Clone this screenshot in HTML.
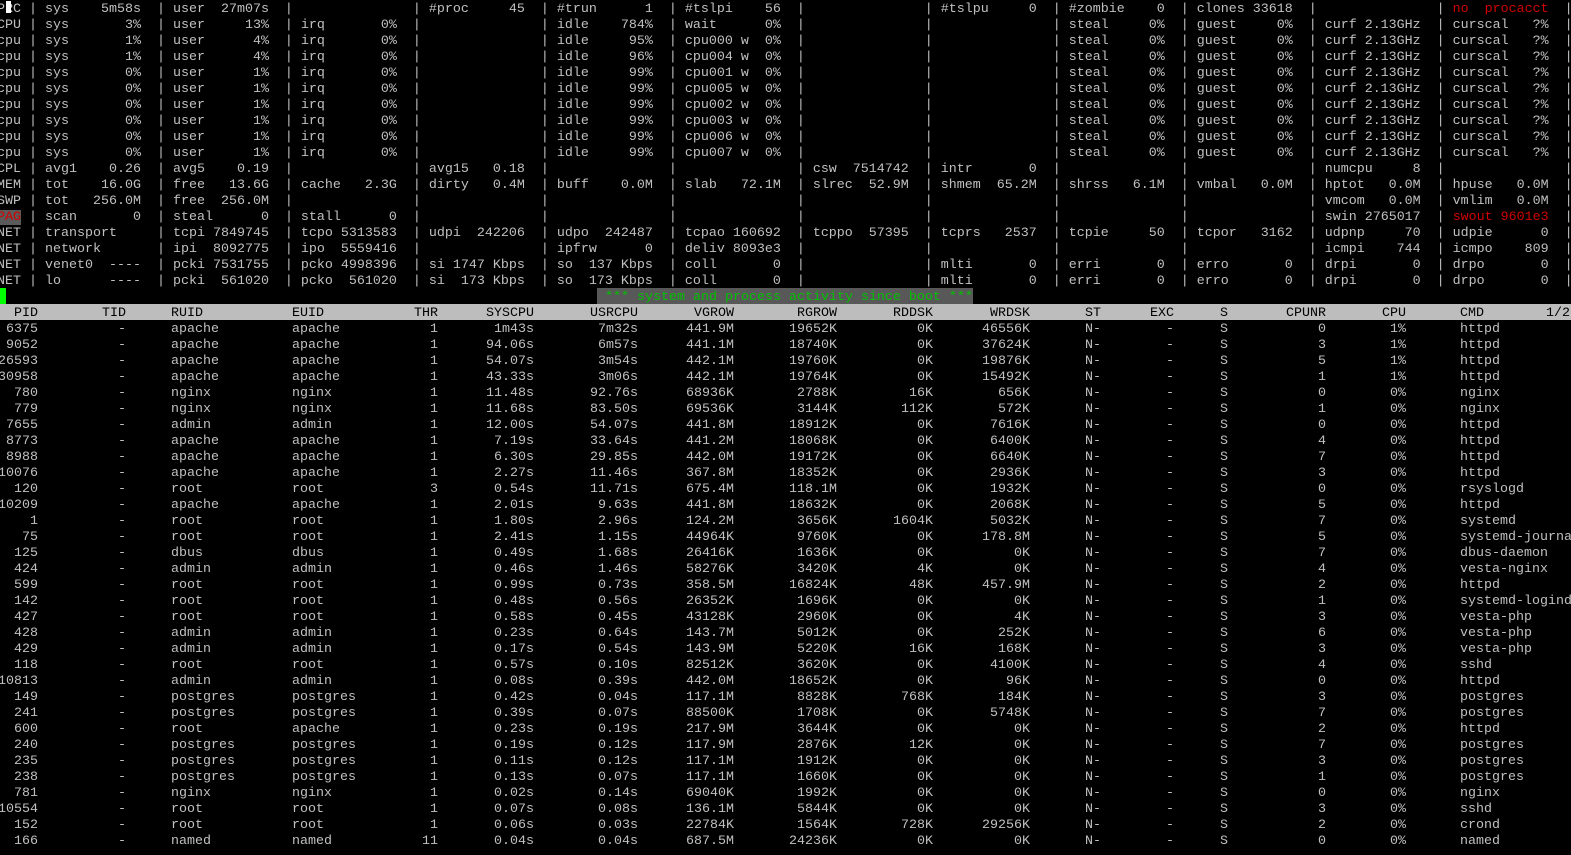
<!DOCTYPE html>
<html><head><meta charset="utf-8"><style>
html,body{margin:0;padding:0;background:#000;width:1571px;height:855px;overflow:hidden;}
body{position:relative;font-family:"Liberation Mono",monospace;font-size:13.33px;color:#c0c0c0;}
pre{margin:0;position:absolute;left:-3px;top:2px;font:inherit;line-height:16px;white-space:pre;}
.red{color:#d00000}
.pag{color:#d00000;background:#5a5a5a}
#cur{position:absolute;left:6px;top:1px;width:5px;height:12px;background:#fff}
#gcur{position:absolute;left:0;top:288px;width:6px;height:16px;background:#00ff00}
#ban{position:absolute;left:597px;top:288px;width:376px;height:16px;background:#585858;}
#bant{position:absolute;left:597px;top:290px;color:#00c000;line-height:16px;white-space:pre}
#hdrbg{position:absolute;left:0;top:304px;width:1571px;height:16px;background:#bdbdbd}
#hdr{color:#000}
.r{position:absolute;left:0;width:1571px;height:16px;line-height:16px;white-space:pre}
.r i{font-style:normal;position:absolute;top:2px}
.a{right:1533px}.b{right:1445px}.c{left:171px}.d{left:292px}.e{right:1133px}.f{right:1037px}
.g{right:933px}.h{right:837px}.k{right:734px}.l{right:638px}.m{right:541px}.n{left:1085px}
.o{right:397px}.p{left:1220px}.q{right:245px}.s{right:165px}.t{left:1460px}.u{left:1546px}
</style></head><body>
<pre>PRC | sys    5m58s  | user  27m07s  |               | #proc     45  | #trun      1  | #tslpi    56  |               | #tslpu     0  | #zombie    0  | clones 33618  |               | <span class="red">no  procacct</span>  |
CPU | sys       3%  | user     13%  | irq       0%  |               | idle    784%  | wait      0%  |               |               | steal     0%  | guest     0%  | curf 2.13GHz  | curscal   ?%  |
cpu | sys       1%  | user      4%  | irq       0%  |               | idle     95%  | cpu000 w  0%  |               |               | steal     0%  | guest     0%  | curf 2.13GHz  | curscal   ?%  |
cpu | sys       1%  | user      4%  | irq       0%  |               | idle     96%  | cpu004 w  0%  |               |               | steal     0%  | guest     0%  | curf 2.13GHz  | curscal   ?%  |
cpu | sys       0%  | user      1%  | irq       0%  |               | idle     99%  | cpu001 w  0%  |               |               | steal     0%  | guest     0%  | curf 2.13GHz  | curscal   ?%  |
cpu | sys       0%  | user      1%  | irq       0%  |               | idle     99%  | cpu005 w  0%  |               |               | steal     0%  | guest     0%  | curf 2.13GHz  | curscal   ?%  |
cpu | sys       0%  | user      1%  | irq       0%  |               | idle     99%  | cpu002 w  0%  |               |               | steal     0%  | guest     0%  | curf 2.13GHz  | curscal   ?%  |
cpu | sys       0%  | user      1%  | irq       0%  |               | idle     99%  | cpu003 w  0%  |               |               | steal     0%  | guest     0%  | curf 2.13GHz  | curscal   ?%  |
cpu | sys       0%  | user      1%  | irq       0%  |               | idle     99%  | cpu006 w  0%  |               |               | steal     0%  | guest     0%  | curf 2.13GHz  | curscal   ?%  |
cpu | sys       0%  | user      1%  | irq       0%  |               | idle     99%  | cpu007 w  0%  |               |               | steal     0%  | guest     0%  | curf 2.13GHz  | curscal   ?%  |
CPL | avg1    0.26  | avg5    0.19  |               | avg15   0.18  |               |               | csw  7514742  | intr       0  |               |               | numcpu     8  |               |
MEM | tot    16.0G  | free   13.6G  | cache   2.3G  | dirty   0.4M  | buff    0.0M  | slab   72.1M  | slrec  52.9M  | shmem  65.2M  | shrss   6.1M  | vmbal   0.0M  | hptot   0.0M  | hpuse   0.0M  |
SWP | tot   256.0M  | free  256.0M  |               |               |               |               |               |               |               |               | vmcom   0.0M  | vmlim   0.0M  |
<span class="pag">PAG</span> | scan       0  | steal      0  | stall      0  |               |               |               |               |               |               |               | swin 2765017  | <span class="red">swout 9601e3</span>  |
NET | transport     | tcpi 7849745  | tcpo 5313583  | udpi  242206  | udpo  242487  | tcpao 160692  | tcppo  57395  | tcprs   2537  | tcpie     50  | tcpor   3162  | udpnp     70  | udpie      0  |
NET | network       | ipi  8092775  | ipo  5559416  |               | ipfrw      0  | deliv 8093e3  |               |               |               |               | icmpi    744  | icmpo    809  |
NET | venet0  ----  | pcki 7531755  | pcko 4998396  | si 1747 Kbps  | so  137 Kbps  | coll       0  |               | mlti       0  | erri       0  | erro       0  | drpi       0  | drpo       0  |
NET | lo      ----  | pcki  561020  | pcko  561020  | si  173 Kbps  | so  173 Kbps  | coll       0  |               | mlti       0  | erri       0  | erro       0  | drpi       0  | drpo       0  |</pre>
<div id="cur"></div>
<div id="gcur"></div>
<div id="ban"></div>
<div id="bant"> *** system and process activity since boot ***</div>
<div id="hdrbg"></div>
<div id="hdr" class="r" style="top:304px"><i class="a">PID</i><i class="b">TID</i><i class="c">RUID</i><i class="d">EUID</i><i class="e">THR</i><i class="f">SYSCPU</i><i class="g">USRCPU</i><i class="h">VGROW</i><i class="k">RGROW</i><i class="l">RDDSK</i><i class="m">WRDSK</i><i class="n">ST</i><i class="o">EXC</i><i class="p">S</i><i class="q">CPUNR</i><i class="s">CPU</i><i class="t">CMD</i><i class="u">1/2</i></div>
<div class="r" style="top:320px"><i class="a">6375</i><i class="b">-</i><i class="c">apache</i><i class="d">apache</i><i class="e">1</i><i class="f">1m43s</i><i class="g">7m32s</i><i class="h">441.9M</i><i class="k">19652K</i><i class="l">0K</i><i class="m">46556K</i><i class="n">N-</i><i class="o">-</i><i class="p">S</i><i class="q">0</i><i class="s">1%</i><i class="t">httpd</i></div>
<div class="r" style="top:336px"><i class="a">9052</i><i class="b">-</i><i class="c">apache</i><i class="d">apache</i><i class="e">1</i><i class="f">94.06s</i><i class="g">6m57s</i><i class="h">441.1M</i><i class="k">18740K</i><i class="l">0K</i><i class="m">37624K</i><i class="n">N-</i><i class="o">-</i><i class="p">S</i><i class="q">3</i><i class="s">1%</i><i class="t">httpd</i></div>
<div class="r" style="top:352px"><i class="a">26593</i><i class="b">-</i><i class="c">apache</i><i class="d">apache</i><i class="e">1</i><i class="f">54.07s</i><i class="g">3m54s</i><i class="h">442.1M</i><i class="k">19760K</i><i class="l">0K</i><i class="m">19876K</i><i class="n">N-</i><i class="o">-</i><i class="p">S</i><i class="q">5</i><i class="s">1%</i><i class="t">httpd</i></div>
<div class="r" style="top:368px"><i class="a">30958</i><i class="b">-</i><i class="c">apache</i><i class="d">apache</i><i class="e">1</i><i class="f">43.33s</i><i class="g">3m06s</i><i class="h">442.1M</i><i class="k">19764K</i><i class="l">0K</i><i class="m">15492K</i><i class="n">N-</i><i class="o">-</i><i class="p">S</i><i class="q">1</i><i class="s">1%</i><i class="t">httpd</i></div>
<div class="r" style="top:384px"><i class="a">780</i><i class="b">-</i><i class="c">nginx</i><i class="d">nginx</i><i class="e">1</i><i class="f">11.48s</i><i class="g">92.76s</i><i class="h">68936K</i><i class="k">2788K</i><i class="l">16K</i><i class="m">656K</i><i class="n">N-</i><i class="o">-</i><i class="p">S</i><i class="q">0</i><i class="s">0%</i><i class="t">nginx</i></div>
<div class="r" style="top:400px"><i class="a">779</i><i class="b">-</i><i class="c">nginx</i><i class="d">nginx</i><i class="e">1</i><i class="f">11.68s</i><i class="g">83.50s</i><i class="h">69536K</i><i class="k">3144K</i><i class="l">112K</i><i class="m">572K</i><i class="n">N-</i><i class="o">-</i><i class="p">S</i><i class="q">1</i><i class="s">0%</i><i class="t">nginx</i></div>
<div class="r" style="top:416px"><i class="a">7655</i><i class="b">-</i><i class="c">admin</i><i class="d">admin</i><i class="e">1</i><i class="f">12.00s</i><i class="g">54.07s</i><i class="h">441.8M</i><i class="k">18912K</i><i class="l">0K</i><i class="m">7616K</i><i class="n">N-</i><i class="o">-</i><i class="p">S</i><i class="q">0</i><i class="s">0%</i><i class="t">httpd</i></div>
<div class="r" style="top:432px"><i class="a">8773</i><i class="b">-</i><i class="c">apache</i><i class="d">apache</i><i class="e">1</i><i class="f">7.19s</i><i class="g">33.64s</i><i class="h">441.2M</i><i class="k">18068K</i><i class="l">0K</i><i class="m">6400K</i><i class="n">N-</i><i class="o">-</i><i class="p">S</i><i class="q">4</i><i class="s">0%</i><i class="t">httpd</i></div>
<div class="r" style="top:448px"><i class="a">8988</i><i class="b">-</i><i class="c">apache</i><i class="d">apache</i><i class="e">1</i><i class="f">6.30s</i><i class="g">29.85s</i><i class="h">442.0M</i><i class="k">19172K</i><i class="l">0K</i><i class="m">6640K</i><i class="n">N-</i><i class="o">-</i><i class="p">S</i><i class="q">7</i><i class="s">0%</i><i class="t">httpd</i></div>
<div class="r" style="top:464px"><i class="a">10076</i><i class="b">-</i><i class="c">apache</i><i class="d">apache</i><i class="e">1</i><i class="f">2.27s</i><i class="g">11.46s</i><i class="h">367.8M</i><i class="k">18352K</i><i class="l">0K</i><i class="m">2936K</i><i class="n">N-</i><i class="o">-</i><i class="p">S</i><i class="q">3</i><i class="s">0%</i><i class="t">httpd</i></div>
<div class="r" style="top:480px"><i class="a">120</i><i class="b">-</i><i class="c">root</i><i class="d">root</i><i class="e">3</i><i class="f">0.54s</i><i class="g">11.71s</i><i class="h">675.4M</i><i class="k">118.1M</i><i class="l">0K</i><i class="m">1932K</i><i class="n">N-</i><i class="o">-</i><i class="p">S</i><i class="q">0</i><i class="s">0%</i><i class="t">rsyslogd</i></div>
<div class="r" style="top:496px"><i class="a">10209</i><i class="b">-</i><i class="c">apache</i><i class="d">apache</i><i class="e">1</i><i class="f">2.01s</i><i class="g">9.63s</i><i class="h">441.8M</i><i class="k">18632K</i><i class="l">0K</i><i class="m">2068K</i><i class="n">N-</i><i class="o">-</i><i class="p">S</i><i class="q">5</i><i class="s">0%</i><i class="t">httpd</i></div>
<div class="r" style="top:512px"><i class="a">1</i><i class="b">-</i><i class="c">root</i><i class="d">root</i><i class="e">1</i><i class="f">1.80s</i><i class="g">2.96s</i><i class="h">124.2M</i><i class="k">3656K</i><i class="l">1604K</i><i class="m">5032K</i><i class="n">N-</i><i class="o">-</i><i class="p">S</i><i class="q">7</i><i class="s">0%</i><i class="t">systemd</i></div>
<div class="r" style="top:528px"><i class="a">75</i><i class="b">-</i><i class="c">root</i><i class="d">root</i><i class="e">1</i><i class="f">2.41s</i><i class="g">1.15s</i><i class="h">44964K</i><i class="k">9760K</i><i class="l">0K</i><i class="m">178.8M</i><i class="n">N-</i><i class="o">-</i><i class="p">S</i><i class="q">5</i><i class="s">0%</i><i class="t">systemd-journa</i></div>
<div class="r" style="top:544px"><i class="a">125</i><i class="b">-</i><i class="c">dbus</i><i class="d">dbus</i><i class="e">1</i><i class="f">0.49s</i><i class="g">1.68s</i><i class="h">26416K</i><i class="k">1636K</i><i class="l">0K</i><i class="m">0K</i><i class="n">N-</i><i class="o">-</i><i class="p">S</i><i class="q">7</i><i class="s">0%</i><i class="t">dbus-daemon</i></div>
<div class="r" style="top:560px"><i class="a">424</i><i class="b">-</i><i class="c">admin</i><i class="d">admin</i><i class="e">1</i><i class="f">0.46s</i><i class="g">1.46s</i><i class="h">58276K</i><i class="k">3420K</i><i class="l">4K</i><i class="m">0K</i><i class="n">N-</i><i class="o">-</i><i class="p">S</i><i class="q">4</i><i class="s">0%</i><i class="t">vesta-nginx</i></div>
<div class="r" style="top:576px"><i class="a">599</i><i class="b">-</i><i class="c">root</i><i class="d">root</i><i class="e">1</i><i class="f">0.99s</i><i class="g">0.73s</i><i class="h">358.5M</i><i class="k">16824K</i><i class="l">48K</i><i class="m">457.9M</i><i class="n">N-</i><i class="o">-</i><i class="p">S</i><i class="q">2</i><i class="s">0%</i><i class="t">httpd</i></div>
<div class="r" style="top:592px"><i class="a">142</i><i class="b">-</i><i class="c">root</i><i class="d">root</i><i class="e">1</i><i class="f">0.48s</i><i class="g">0.56s</i><i class="h">26352K</i><i class="k">1696K</i><i class="l">0K</i><i class="m">0K</i><i class="n">N-</i><i class="o">-</i><i class="p">S</i><i class="q">1</i><i class="s">0%</i><i class="t">systemd-logind</i></div>
<div class="r" style="top:608px"><i class="a">427</i><i class="b">-</i><i class="c">root</i><i class="d">root</i><i class="e">1</i><i class="f">0.58s</i><i class="g">0.45s</i><i class="h">43128K</i><i class="k">2960K</i><i class="l">0K</i><i class="m">4K</i><i class="n">N-</i><i class="o">-</i><i class="p">S</i><i class="q">3</i><i class="s">0%</i><i class="t">vesta-php</i></div>
<div class="r" style="top:624px"><i class="a">428</i><i class="b">-</i><i class="c">admin</i><i class="d">admin</i><i class="e">1</i><i class="f">0.23s</i><i class="g">0.64s</i><i class="h">143.7M</i><i class="k">5012K</i><i class="l">0K</i><i class="m">252K</i><i class="n">N-</i><i class="o">-</i><i class="p">S</i><i class="q">6</i><i class="s">0%</i><i class="t">vesta-php</i></div>
<div class="r" style="top:640px"><i class="a">429</i><i class="b">-</i><i class="c">admin</i><i class="d">admin</i><i class="e">1</i><i class="f">0.17s</i><i class="g">0.54s</i><i class="h">143.9M</i><i class="k">5220K</i><i class="l">16K</i><i class="m">168K</i><i class="n">N-</i><i class="o">-</i><i class="p">S</i><i class="q">3</i><i class="s">0%</i><i class="t">vesta-php</i></div>
<div class="r" style="top:656px"><i class="a">118</i><i class="b">-</i><i class="c">root</i><i class="d">root</i><i class="e">1</i><i class="f">0.57s</i><i class="g">0.10s</i><i class="h">82512K</i><i class="k">3620K</i><i class="l">0K</i><i class="m">4100K</i><i class="n">N-</i><i class="o">-</i><i class="p">S</i><i class="q">4</i><i class="s">0%</i><i class="t">sshd</i></div>
<div class="r" style="top:672px"><i class="a">10813</i><i class="b">-</i><i class="c">admin</i><i class="d">admin</i><i class="e">1</i><i class="f">0.08s</i><i class="g">0.39s</i><i class="h">442.0M</i><i class="k">18652K</i><i class="l">0K</i><i class="m">96K</i><i class="n">N-</i><i class="o">-</i><i class="p">S</i><i class="q">0</i><i class="s">0%</i><i class="t">httpd</i></div>
<div class="r" style="top:688px"><i class="a">149</i><i class="b">-</i><i class="c">postgres</i><i class="d">postgres</i><i class="e">1</i><i class="f">0.42s</i><i class="g">0.04s</i><i class="h">117.1M</i><i class="k">8828K</i><i class="l">768K</i><i class="m">184K</i><i class="n">N-</i><i class="o">-</i><i class="p">S</i><i class="q">3</i><i class="s">0%</i><i class="t">postgres</i></div>
<div class="r" style="top:704px"><i class="a">241</i><i class="b">-</i><i class="c">postgres</i><i class="d">postgres</i><i class="e">1</i><i class="f">0.39s</i><i class="g">0.07s</i><i class="h">88500K</i><i class="k">1708K</i><i class="l">0K</i><i class="m">5748K</i><i class="n">N-</i><i class="o">-</i><i class="p">S</i><i class="q">7</i><i class="s">0%</i><i class="t">postgres</i></div>
<div class="r" style="top:720px"><i class="a">600</i><i class="b">-</i><i class="c">root</i><i class="d">apache</i><i class="e">1</i><i class="f">0.23s</i><i class="g">0.19s</i><i class="h">217.9M</i><i class="k">3644K</i><i class="l">0K</i><i class="m">0K</i><i class="n">N-</i><i class="o">-</i><i class="p">S</i><i class="q">2</i><i class="s">0%</i><i class="t">httpd</i></div>
<div class="r" style="top:736px"><i class="a">240</i><i class="b">-</i><i class="c">postgres</i><i class="d">postgres</i><i class="e">1</i><i class="f">0.19s</i><i class="g">0.12s</i><i class="h">117.9M</i><i class="k">2876K</i><i class="l">12K</i><i class="m">0K</i><i class="n">N-</i><i class="o">-</i><i class="p">S</i><i class="q">7</i><i class="s">0%</i><i class="t">postgres</i></div>
<div class="r" style="top:752px"><i class="a">235</i><i class="b">-</i><i class="c">postgres</i><i class="d">postgres</i><i class="e">1</i><i class="f">0.11s</i><i class="g">0.12s</i><i class="h">117.1M</i><i class="k">1912K</i><i class="l">0K</i><i class="m">0K</i><i class="n">N-</i><i class="o">-</i><i class="p">S</i><i class="q">3</i><i class="s">0%</i><i class="t">postgres</i></div>
<div class="r" style="top:768px"><i class="a">238</i><i class="b">-</i><i class="c">postgres</i><i class="d">postgres</i><i class="e">1</i><i class="f">0.13s</i><i class="g">0.07s</i><i class="h">117.1M</i><i class="k">1660K</i><i class="l">0K</i><i class="m">0K</i><i class="n">N-</i><i class="o">-</i><i class="p">S</i><i class="q">1</i><i class="s">0%</i><i class="t">postgres</i></div>
<div class="r" style="top:784px"><i class="a">781</i><i class="b">-</i><i class="c">nginx</i><i class="d">nginx</i><i class="e">1</i><i class="f">0.02s</i><i class="g">0.14s</i><i class="h">69040K</i><i class="k">1992K</i><i class="l">0K</i><i class="m">0K</i><i class="n">N-</i><i class="o">-</i><i class="p">S</i><i class="q">0</i><i class="s">0%</i><i class="t">nginx</i></div>
<div class="r" style="top:800px"><i class="a">10554</i><i class="b">-</i><i class="c">root</i><i class="d">root</i><i class="e">1</i><i class="f">0.07s</i><i class="g">0.08s</i><i class="h">136.1M</i><i class="k">5844K</i><i class="l">0K</i><i class="m">0K</i><i class="n">N-</i><i class="o">-</i><i class="p">S</i><i class="q">3</i><i class="s">0%</i><i class="t">sshd</i></div>
<div class="r" style="top:816px"><i class="a">152</i><i class="b">-</i><i class="c">root</i><i class="d">root</i><i class="e">1</i><i class="f">0.06s</i><i class="g">0.03s</i><i class="h">22784K</i><i class="k">1564K</i><i class="l">728K</i><i class="m">29256K</i><i class="n">N-</i><i class="o">-</i><i class="p">S</i><i class="q">2</i><i class="s">0%</i><i class="t">crond</i></div>
<div class="r" style="top:832px"><i class="a">166</i><i class="b">-</i><i class="c">named</i><i class="d">named</i><i class="e">11</i><i class="f">0.04s</i><i class="g">0.04s</i><i class="h">687.5M</i><i class="k">24236K</i><i class="l">0K</i><i class="m">0K</i><i class="n">N-</i><i class="o">-</i><i class="p">S</i><i class="q">0</i><i class="s">0%</i><i class="t">named</i></div>
</body></html>
